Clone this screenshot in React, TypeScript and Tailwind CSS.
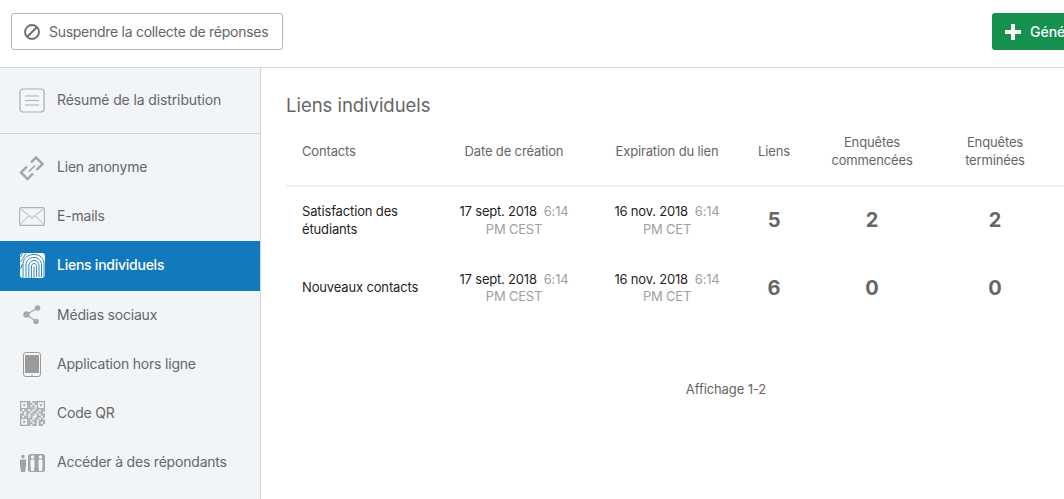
import { ReactNode } from "react";

const SummaryIcon = () => (
  <svg width="26" height="25" viewBox="0 0 26 25" fill="none">
    <rect x="1" y="1" width="24" height="23" rx="3" fill="#f4f6f8" stroke="#a9abad" strokeWidth="1.2" />
    <path d="M6 8h14M6 12.5h14M6 17h14" stroke="#a9abad" strokeWidth="1" />
  </svg>
);

const LinkIcon = () => (
  <svg width="26" height="26" viewBox="0 0 26 26" fill="none">
    <path d="M12 7.500 17 2.500l6.500 6.500-6 6" stroke="#a3a3a3" strokeWidth="2.400" />
    <path d="M14 18.500 8.500 24 2 17.500l6-6" stroke="#a3a3a3" strokeWidth="2.400" />
    <path d="m10 16.500 6-6" stroke="#a3a3a3" strokeWidth="1.600" />
  </svg>
);

const MailIcon = () => (
  <svg width="26" height="19" viewBox="0 0 26 19" fill="none">
    <rect x="0.600" y="0.600" width="24.800" height="17.800" rx="2" stroke="#b1b1b1" strokeWidth="1.100" />
    <path d="m1 1.500 12 9.500L25 1.500M1 17.500 9.500 9M25 17.500 16.500 9" stroke="#b1b1b1" strokeWidth="1" />
  </svg>
);

const FingerprintIcon = () => (
  <svg width="25" height="25" viewBox="0 0 25 25" fill="none">
    <rect width="25" height="25" rx="3" fill="#ffffff" />
    <g stroke="#1279bd" strokeWidth="0.900">
      <path d="M3 25V11C3 5 8 1.500 14 1.500s10 4 10 9.500v14" />
      <path d="M6 25V12c0-4.500 3.500-7.500 8-7.500s7.500 3 7.500 7.500v12" />
      <path d="M8.800 25V13c0-3 2.200-5.500 5.200-5.500s5 2.500 5 5.500v11" />
      <path d="M11.400 25V14c0-2 1-3.500 2.600-3.500s2.600 1.500 2.600 3.500v10" />
      <path d="M14 25V14" />
      <path d="M0.500 9 6 0.500M0.500 16 2.500 11M0.500 4 2.500 0.500" />
    </g>
  </svg>
);

const ShareIcon = () => (
  <svg width="18" height="20" viewBox="0 0 18 20" fill="none">
    <path d="M14.500 3 3.500 9.500 13 16.500" stroke="#a8a8a8" strokeWidth="1.200" />
    <circle cx="14.500" cy="3" r="2.800" fill="#a8a8a8" />
    <circle cx="3.500" cy="9.500" r="3.200" fill="#a8a8a8" />
    <circle cx="13" cy="16.500" r="2.800" fill="#a8a8a8" />
  </svg>
);

const TabletIcon = () => (
  <svg width="18" height="25" viewBox="0 0 18 25" fill="none">
    <rect x="0.500" y="0.500" width="17" height="24" rx="2.500" fill="#f4f6f8" stroke="#9b9b9b" />
    <rect x="2" y="3" width="14" height="18" fill="#9b9b9b" />
    <circle cx="9" cy="23" r="0.800" fill="#9b9b9b" />
  </svg>
);

// motif du code QR, une ligne par rangée de modules
const qrRows = [
  "....x.xx....",
  "....xx.x....",
  "....x.x.....",
  "....xxx.x...",
  "x.xx.x.xx.xx",
  ".x.xx.xx.xx.",
  "xx.x.xx.x.xx",
  "x.xx.x..xx.x",
  "....xx.xx.x.",
  "....x.xx.xxx",
  "....xx.x.x.x",
  "....x.xx.xx.",
];

const QrIcon = () => (
  <svg width="25" height="25" viewBox="0 0 24 24" fill="none">
    {[[0, 0], [16, 0], [0, 16]].map(([x, y]) => (
      <g key={`${x}-${y}`}>
        <rect x={x + 0.600} y={y + 0.600} width="6.800" height="6.800" stroke="#a8a8a8" strokeWidth="1.200" />
        <rect x={x + 3} y={y + 3} width="2" height="2" fill="#a8a8a8" />
      </g>
    ))}
    {qrRows.map((line, y) =>
      line.split("").map((c, x) =>
        c === "x" ? <rect key={`${x}:${y}`} x={x * 2} y={y * 2} width="2" height="2" fill="#a8a8a8" /> : null,
      ),
    )}
  </svg>
);

const PeopleIcon = () => (
  <svg width="25" height="18" viewBox="0 0 25 18" fill="none">
    <circle cx="3" cy="2.500" r="1.700" fill="#a3a3a3" />
    <path d="M0 5.500h6v6.500l-1 6H1l-1-6z" fill="#a3a3a3" />
    <rect x="8" y="0" width="17" height="18" rx="2.500" fill="#a3a3a3" />
    <g fill="#f4f6f8">
      <circle cx="12.500" cy="3" r="1.700" />
      <circle cx="20.500" cy="3" r="1.700" />
      <path d="M10.500 5.500h4V12l-.6 5h-2.800l-.6-5zM18.500 5.500h4V12l-.6 5h-2.800l-.6-5z" />
    </g>
  </svg>
);

const navItems: { label: string; icon: ReactNode; active?: boolean }[] = [
  { label: "Lien anonyme", icon: <LinkIcon /> },
  { label: "E-mails", icon: <MailIcon /> },
  { label: "Liens individuels", icon: <FingerprintIcon />, active: true },
  { label: "Médias sociaux", icon: <ShareIcon /> },
  { label: "Application hors ligne", icon: <TabletIcon /> },
  { label: "Code QR", icon: <QrIcon /> },
  { label: "Accéder à des répondants", icon: <PeopleIcon /> },
];

const rows = [
  { name: ["Satisfaction des", "étudiants"], links: 5, started: 2, done: 2 },
  { name: ["Nouveaux contacts"], links: 6, started: 0, done: 0 },
];

const DateCell = ({ date, tz }: { date: string; tz: string }) => (
  <td className="text-center text-[13px] leading-[17.500px] tracking-[-0.2px]">
    <span className="text-[#1f1f1f]">{date}</span>
    <span className="ml-[7px] text-[#a0a0a0]">6:14</span>
    <br />
    <span className="text-[#a0a0a0]">{tz}</span>
  </td>
);

const App = () => {
  return (
    <div className="flex h-[499px] w-[1064px] flex-col overflow-hidden bg-white font-['Inter','Liberation_Sans',sans-serif] text-[#666666]">
      {/* barre du haut */}
      <div className="flex h-[68px] shrink-0 items-start border-b border-[#d3d3d3] pt-[13px] pl-[11px]">
        <button className="flex h-[37px] w-[272px] shrink-0 items-center rounded-[3px] border border-[#b4b4b4] pl-[11px] text-[14px]">
          <svg width="18" height="18" viewBox="0 0 18 18" fill="none" stroke="#6f6f6f" strokeWidth="1.900">
            <circle cx="9" cy="9" r="7" />
            <path d="M4.500 13.500l9-9" />
          </svg>
          <span className="ml-[8px] whitespace-nowrap tracking-[-0.28px]">Suspendre la collecte de réponses</span>
        </button>
        <button className="ml-[709px] flex h-[37px] w-[200px] shrink-0 items-center rounded-[3px] bg-[#15904f] pl-[12px] text-[14px] font-medium text-white">
          <svg width="18" height="18" viewBox="0 0 18 18" fill="#ffffff">
            <path d="M7 1h4v6h6v4h-6v6H7v-6H1V7h6z" />
          </svg>
          <span className="ml-[8px] whitespace-nowrap">Générer un lien</span>
        </button>
      </div>

      <div className="flex min-h-0 flex-1">
        {/* menu latéral */}
        <aside className="w-[261px] shrink-0 border-r border-[#d3d3d3] bg-[#f2f5f8]">
          <div className="flex h-[66px] items-center border-b border-[#d3d3d3] pl-[19px] text-[14px]">
            <span className="flex w-[26px] justify-center"><SummaryIcon /></span>
            <span className="ml-[12px] pb-[2px] tracking-[-0.12px]">Résumé de la distribution</span>
          </div>
          <nav className="pt-[9px]">
            {navItems.map((item) => (
              <div
                key={item.label}
                className={
                  item.active
                    ? "flex h-[49.2px] items-center bg-[#1279bd] pl-[19px] text-[14px] font-medium tracking-[-0.25px] text-white"
                    : "flex h-[49.2px] items-center pl-[19px] text-[14px] tracking-[-0.2px]"
                }
              >
                <span className="flex w-[26px] justify-center">{item.icon}</span>
                <span className="ml-[12px] whitespace-nowrap pb-[2px]">{item.label}</span>
              </div>
            ))}
          </nav>
        </aside>

        {/* contenu */}
        <main className="min-w-0 flex-1 pt-[25px] pl-[25px]">
          <h1 className="text-[18.500px] leading-[24px] tracking-[-0.03px]">Liens individuels</h1>
          <table className="mt-[9px] w-[778px] table-fixed border-collapse text-[13px] tracking-[-0.15px]">
            <colgroup>
              <col className="w-[150px]" />
              <col className="w-[156px]" />
              <col className="w-[150px]" />
              <col className="w-[64px]" />
              <col className="w-[132px]" />
              <col className="w-[126px]" />
            </colgroup>
            <thead>
              <tr className="h-[60px] border-b-2 border-[#f0f0f0] text-center leading-[17.500px]">
                <th className="pb-[8px] pl-[16px] text-left font-normal">Contacts</th>
                <th className="pb-[8px] font-normal">Date de création</th>
                <th className="pb-[8px] font-normal">Expiration du lien</th>
                <th className="pb-[8px] font-normal">Liens</th>
                <th className="pb-[8px] font-normal">Enquêtes<br />commencées</th>
                <th className="pr-[12px] pb-[8px] font-normal">Enquêtes<br />terminées</th>
              </tr>
            </thead>
            <tbody>
              {rows.map((row) => (
                <tr key={row.links} className="h-[68px]">
                  <td className="pl-[16px] leading-[17.500px] text-[#1f1f1f]">
                    {row.name.map((line) => (
                      <div key={line}>{line}</div>
                    ))}
                  </td>
                  <DateCell date="17 sept. 2018" tz="PM CEST" />
                  <DateCell date="16 nov. 2018" tz="PM CET" />
                  <td className="pb-[1px] text-center text-[20px] font-bold">{row.links}</td>
                  <td className="pb-[1px] text-center text-[20px] font-bold">{row.started}</td>
                  <td className="pr-[12px] pb-[1px] text-center text-[20px] font-bold">{row.done}</td>
                </tr>
              ))}
            </tbody>
          </table>
          <p className="mt-[59px] w-[880px] text-center text-[13px] leading-[17px] tracking-[-0.1px]">Affichage 1-2</p>
        </main>
      </div>
    </div>
  );
};

export default App;
